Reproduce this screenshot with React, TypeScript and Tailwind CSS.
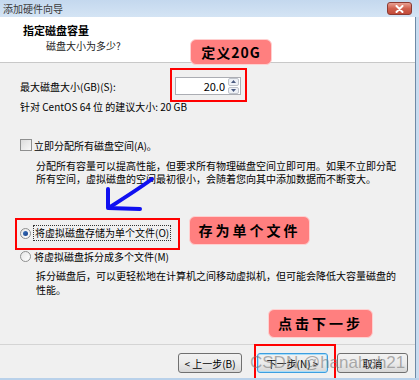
import React from 'react';

const cjk = { fontFamily: '"Noto Sans CJK SC", "Liberation Sans", sans-serif' };

function Radio({ checked }: { checked?: boolean }) {
  return (
    <span className="w-[11px] h-[11px] rounded-full border border-[#8e8f8f] bg-gradient-to-br from-[#e6e6e6] to-white flex items-center justify-center shrink-0">
      {checked && <span className="w-[5px] h-[5px] rounded-full bg-gradient-to-br from-[#3a74c0] to-[#1a3f86]" />}
    </span>
  );
}

function Btn({ children, w, focus }: { children: React.ReactNode; w: string; focus?: boolean }) {
  return (
    <div
      className={`${w} h-[20px] rounded-[3px] border ${
        focus ? 'border-[#3c9ee0] shadow-[inset_0_0_0_1px_#a8dcf7]' : 'border-[#707070]'
      } bg-gradient-to-b from-[#f2f2f2] via-[#ebebeb] to-[#d6d6d6] flex items-center justify-center text-[10px] text-black`}
    >
      {children}
    </div>
  );
}

export default function App() {
  return (
    <div className="w-[419px] h-[380px] relative overflow-hidden bg-[#c9dcf0] text-[10px] text-black" style={cjk}>
      {/* title bar */}
      <div className="h-[17px] flex items-center justify-between bg-gradient-to-b from-[#c4d8ee] to-[#d4e4f4]">
        <span className="pl-[3px] text-[10px] text-[#3a3a3a]">添加硬件向导</span>
        <div className="mr-[7px] w-[25px] h-[13px] rounded-[3px] border border-[#8b3a32] bg-gradient-to-b from-[#e8a093] via-[#d0604e] to-[#c24a38] flex items-center justify-center">
          <svg width="9" height="8" viewBox="0 0 9 8">
            <path d="M1.5 1 L7.5 7 M7.5 1 L1.5 7" stroke="white" strokeWidth="2" strokeLinecap="round" />
          </svg>
        </div>
      </div>

      <div className="w-[416px] h-[361px] flex flex-col border-r border-[#6f8aa6]">
        {/* header */}
        <div className="h-[46px] bg-white border-b border-[#c8c8c8] pl-[23px] pt-[6px]">
          <div className="text-[11px] font-bold leading-[14px]">指定磁盘容量</div>
          <div className="pl-[23px] mt-[2px] leading-[14px] text-[#222]">磁盘大小为多少?</div>
        </div>

        {/* body */}
        <div className="flex-1 bg-[#f0f0f0] flex flex-col">
          <div className="mt-[14px] h-[18px] pl-[20px] flex items-center">
            <span className="w-[155px]">最大磁盘大小(GB)(S):</span>
            <div className="w-[66px] h-[18px] bg-white border border-[#abadb3] flex items-center">
              <span className="flex-1 text-right pr-[3px] text-[11px]">20.0</span>
              <div className="w-[12px] h-[16px] flex flex-col gap-[1px] pr-[1px]">
                <div className="flex-1 rounded-[2px] border border-[#c0c4cc] bg-[#eef1f6] flex items-center justify-center">
                  <svg width="5" height="3" viewBox="0 0 5 3"><path d="M0 3 L2.5 0 L5 3Z" fill="#4a5a80" /></svg>
                </div>
                <div className="flex-1 rounded-[2px] border border-[#c0c4cc] bg-[#eef1f6] flex items-center justify-center">
                  <svg width="5" height="3" viewBox="0 0 5 3"><path d="M0 0 L2.5 3 L5 0Z" fill="#4a5a80" /></svg>
                </div>
              </div>
            </div>
          </div>
          <div className="mt-[5px] h-[14px] leading-[14px] pl-[20px]">针对 CentOS 64 位 的建议大小: 20 GB</div>

          <div className="mt-[24px] h-[14px] pl-[20px] flex items-center gap-[2px]">
            <span className="w-[12px] h-[12px] border border-[#8e8f8f] bg-gradient-to-br from-[#dcdcdc] to-[#f8f8f8] shrink-0" />
            <span>立即分配所有磁盘空间(A)。</span>
          </div>
          <div className="mt-[7px] pl-[36px] pr-[16px] leading-[13px]">
            分配所有容量可以提高性能，但要求所有物理磁盘空间立即可用。如果不立即分配所有空间，虚拟磁盘的空间最初很小，会随着您向其中添加数据而不断变大。
          </div>

          <div className="mt-[40px] h-[16px] pl-[20px] flex items-center gap-[2px]">
            <Radio checked />
            <span className="border border-dotted border-[#333] px-[1px] leading-[14px]">将虚拟磁盘存储为单个文件(O)</span>
          </div>
          <div className="mt-[8px] h-[14px] pl-[20px] flex items-center gap-[3px]">
            <Radio />
            <span>将虚拟磁盘拆分成多个文件(M)</span>
          </div>
          <div className="mt-[6px] pl-[36px] pr-[16px] leading-[14px]">
            拆分磁盘后，可以更轻松地在计算机之间移动虚拟机，但可能会降低大容量磁盘的性能。
          </div>
        </div>

        {/* footer */}
        <div className="h-[34px] bg-[#f0f0f0] border-t border-[#d4d4d4] flex items-start pt-[8px] pl-[178px] pb-[2px]">
          <Btn w="w-[64px]">&lt; 上一步(B)</Btn>
          <div className="ml-[15px]">
            <Btn w="w-[71px]" focus>下一步(N) &gt;</Btn>
          </div>
          <div className="ml-[9px]">
            <Btn w="w-[71px]">取消</Btn>
          </div>
        </div>
      </div>

      {/* annotations */}
      <div className="absolute left-[190px] top-[39px] w-[82px] h-[26px] rounded-[6px] bg-[#ff7f7f] border border-[#ffd0d0] flex items-center justify-center text-[14px] font-bold tracking-[1px]">
        定义20G
      </div>
      <div className="absolute left-[170px] top-[68px] w-[77px] h-[34px] border-2 border-[#ff0000]" />

      <svg className="absolute left-[100px] top-[170px]" width="60" height="45" viewBox="0 0 60 45">
        <path d="M52 9 C40 18 24 28 10 37" stroke="#1010f0" strokeWidth="4" fill="none" strokeLinecap="round" />
        <path d="M8 19 L8 38 L40 39" stroke="#1010f0" strokeWidth="4" fill="none" strokeLinecap="round" strokeLinejoin="round" />
      </svg>

      <div className="absolute left-[15px] top-[218px] w-[165px] h-[32px] border-2 border-[#ff0000]" />
      <div className="absolute left-[189px] top-[216px] w-[121px] h-[29px] rounded-[6px] bg-[#ff7f7f] border border-[#ffd0d0] flex items-center justify-center text-[14px] font-bold tracking-[3px]">
        存为单个文件
      </div>

      <div className="absolute left-[268px] top-[309px] w-[105px] h-[29px] rounded-[6px] bg-[#ff7f7f] border border-[#ffd0d0] flex items-center justify-center text-[14px] font-bold tracking-[3px]">
        点击下一步
      </div>
      <div className="absolute left-[254px] top-[344px] w-[82px] h-[36px] border-2 border-[#ff0000]" />

      <div
        className="absolute left-[250px] top-[353px] text-[17px] leading-[20px] text-[#7a7a7a]/60 whitespace-nowrap"
        style={{ fontFamily: '"Liberation Sans", sans-serif' }}
      >
        CSDN @hanahah21
      </div>
      <div className="absolute left-0 bottom-0 w-[419px] h-[2px] bg-[#b9d1ea]" />
    </div>
  );
}
